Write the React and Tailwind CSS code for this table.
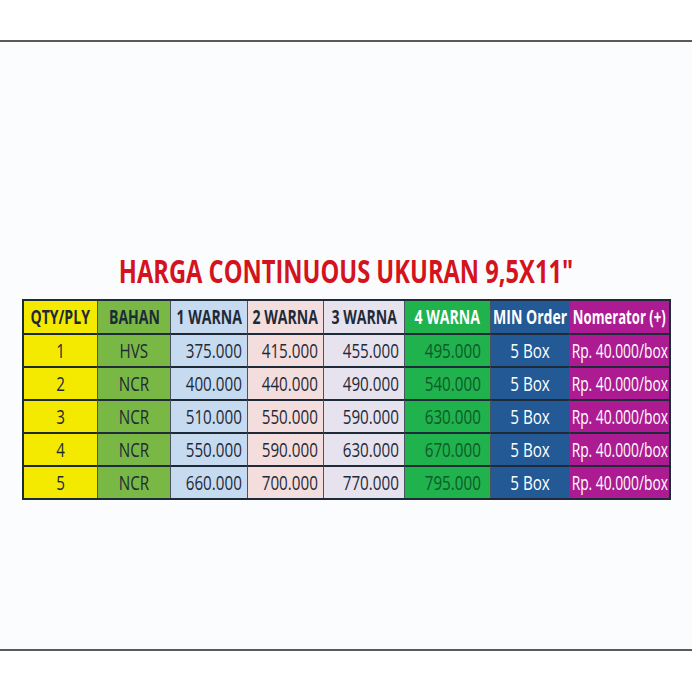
import React from 'react';

const cols = [
  { key: 'qty', label: 'QTY/PLY', head: 'bg-[#f4ea00] text-[#1f2a38]', cell: 'bg-[#f4ea00] text-[#1f2a38] justify-center', txt: 'origin-center scale-x-[0.76]', htxt: 'scale-x-[0.74]' },
  { key: 'bahan', label: 'BAHAN', head: 'bg-[#79b844] text-[#1f2a38]', cell: 'bg-[#79b844] text-[#1f2a38] justify-center', txt: 'origin-center scale-x-[0.76]', htxt: 'scale-x-[0.74]' },
  { key: 'w1', label: '1 WARNA', head: 'bg-[#c6daf0] text-[#1f2a38]', cell: 'bg-[#c6daf0] text-[#1f2a38] justify-end pr-[5px]', txt: 'origin-right scale-x-[0.76]', htxt: 'scale-x-[0.74]' },
  { key: 'w2', label: '2 WARNA', head: 'bg-[#f3dedd] text-[#1f2a38]', cell: 'bg-[#f3dedd] text-[#1f2a38] justify-end pr-[5px]', txt: 'origin-right scale-x-[0.76]', htxt: 'scale-x-[0.74]' },
  { key: 'w3', label: '3 WARNA', head: 'bg-[#e6e2ee] text-[#1f2a38]', cell: 'bg-[#e6e2ee] text-[#1f2a38] justify-end pr-[5px]', txt: 'origin-right scale-x-[0.76]', htxt: 'scale-x-[0.74]' },
  { key: 'w4', label: '4 WARNA', head: 'bg-[#1fb24d] text-white', cell: 'bg-[#1fb24d] text-[#0f5a2a] justify-end pr-[9px]', txt: 'origin-right scale-x-[0.76]', htxt: 'scale-x-[0.74]' },
  { key: 'min', label: 'MIN Order', head: 'bg-[#235a95] text-white', cell: 'bg-[#235a95] text-white justify-center', txt: 'origin-center scale-x-[0.76]', htxt: 'scale-x-[0.74]' },
  { key: 'nom', label: 'Nomerator (+)', head: 'bg-[#ac1b91] text-white', cell: 'bg-[#ac1b91] text-white justify-center', txt: 'origin-center scale-x-[0.69]', htxt: 'scale-x-[0.69]' },
];

const rows = [
  ['1', 'HVS', '375.000', '415.000', '455.000', '495.000', '5 Box', 'Rp. 40.000/box'],
  ['2', 'NCR', '400.000', '440.000', '490.000', '540.000', '5 Box', 'Rp. 40.000/box'],
  ['3', 'NCR', '510.000', '550.000', '590.000', '630.000', '5 Box', 'Rp. 40.000/box'],
  ['4', 'NCR', '550.000', '590.000', '630.000', '670.000', '5 Box', 'Rp. 40.000/box'],
  ['5', 'NCR', '660.000', '700.000', '770.000', '795.000', '5 Box', 'Rp. 40.000/box'],
];

export default function App() {
  return (
    <div className="w-[692px] h-[692px] bg-white pt-[40px] font-['Open_Sans',sans-serif]">
      <div className="h-[611px] bg-[#fbfcfd] border-y-2 border-[#5a5a5a] flex flex-col items-center">
        <h1 className="mt-[210px] text-[32px] leading-[38px] font-bold text-[#d3131d] whitespace-nowrap scale-x-[0.74]">
          HARGA CONTINUOUS UKURAN 9,5X11"
        </h1>
        <div className="mt-[9px] ml-[1px] border-2 border-[#1f2a38] grid grid-cols-[73px_73px_77px_76px_81px_86px_79px_100px]">
          {cols.map((c, i) => (
            <div
              key={c.key}
              className={`h-[32px] flex items-center justify-center text-[19px] font-bold ${c.head} ${i > 0 ? 'border-l border-[#4a5260]' : ''}`}
            >
              <span className={`inline-block whitespace-nowrap ${c.htxt}`}>{c.label}</span>
            </div>
          ))}
          {rows.map((r, ri) =>
            r.map((v, ci) => (
              <div
                key={`${ri}-${ci}`}
                className={`h-[33px] flex items-center text-[20px] border-t-2 border-t-[#1f2a38] ${cols[ci].cell} ${ci > 0 ? 'border-l border-l-[#4a5260]' : ''}`}
              >
                <span className={`inline-block whitespace-nowrap ${cols[ci].txt}`}>{v}</span>
              </div>
            ))
          )}
        </div>
      </div>
    </div>
  );
}
